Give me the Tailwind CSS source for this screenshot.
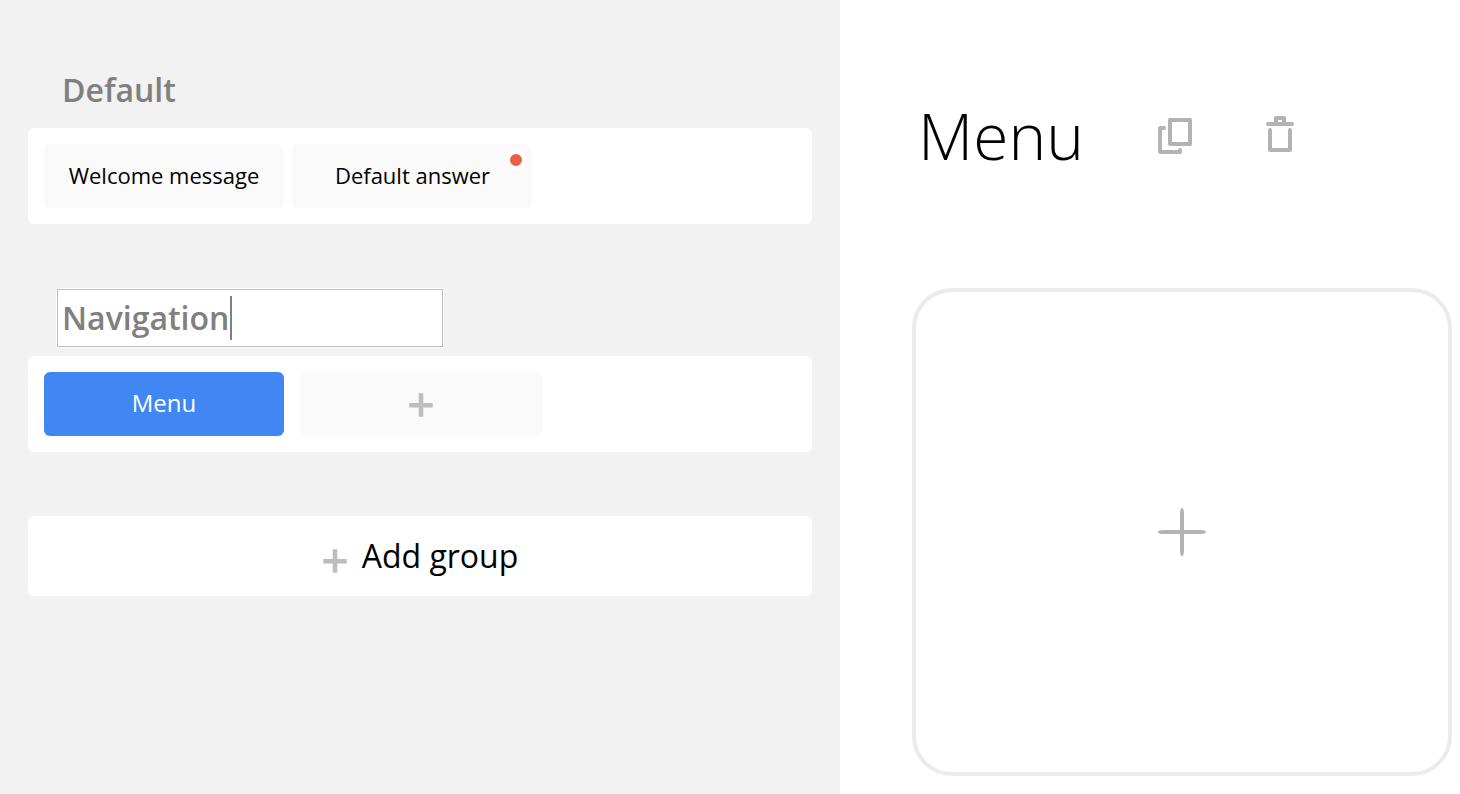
<!DOCTYPE html>
<html lang="en">
<head>
<meta charset="utf-8">
<title>Menu</title>
<script src="https://cdn.jsdelivr.net/npm/@tailwindcss/browser@4"></script>
</head>
<body class="h-[794px] w-[1460px] overflow-hidden bg-white font-['Open_Sans',sans-serif] text-black">
<div class="flex h-full">
  <aside class="flex w-[840px] shrink-0 flex-col bg-[#f2f2f2] px-7 pt-[62px]">
    <h2 class="ml-[34px] h-[58px] w-[386px] text-[32px] leading-[56px] font-semibold text-[#808080]">Default</h2>
    <div class="mt-2 flex h-24 gap-2 rounded-md bg-white p-4">
      <button class="h-16 w-60 rounded-md bg-[#fafafa] pb-0.5 text-[22px]">Welcome message</button>
      <button class="relative h-16 w-60 rounded-md bg-[#fafafa] pb-0.5 pl-px text-[22px]">Default answer
        <span class="absolute top-1.5 right-1.5 size-5 rounded-full border-4 border-white bg-[#ec5f45]"></span>
      </button>
    </div>
    <div class="mt-16 ml-7 flex h-[60px] w-[388px] items-center border border-white bg-white">
      <div class="flex h-[58px] w-full items-center border border-[#bdbdbd] pl-1">
        <span class="text-[32px] leading-[56px] font-semibold text-[#808080]">Navigation</span>
        <span class="ml-px h-11 w-0.5 bg-[#808080]"></span>
      </div>
    </div>
    <div class="mt-2 flex h-24 gap-4 rounded-md bg-white p-4">
      <button class="h-16 w-60 rounded-md bg-[#4087f4] pb-0.5 text-2xl text-white">Menu</button>
      <button class="flex h-16 w-[242px] items-center justify-center rounded-md bg-[#fafafa] pt-0.5">
        <svg class="size-6" viewBox="0 0 24 24" fill="none" stroke="#bdbdbd" stroke-width="4.5"><path d="M.3 12.2H23.7M12 .3V23.7"/></svg>
      </button>
    </div>
    <button class="mt-16 flex h-20 items-center justify-center gap-[15px] rounded-md bg-white pl-px">
      <svg class="mt-2.5 size-6" viewBox="0 0 24 24" fill="none" stroke="#bdbdbd" stroke-width="4.5"><path d="M.3 12.2H23.7M12 .3V23.7"/></svg>
      <span class="text-[32px]">Add group</span>
    </button>
  </aside>
  <main class="flex flex-1 flex-col pt-[88px] pl-[72px]">
    <header class="flex h-24 items-center pl-1.5">
      <h1 class="w-60 text-[64px] leading-[96px] font-light">Menu</h1>
      <svg class="h-9 w-[34px]" viewBox="0 0 34 36" fill="none" stroke="#b3b3b3" stroke-width="4" stroke-linecap="round" stroke-linejoin="round"><rect x="12" y="2" width="20" height="24"/><path d="M6 10H2V34H22V32"/></svg>
      <svg class="mb-1 ml-[74px] h-9 w-7" viewBox="0 0 28 36" fill="none" stroke="#b3b3b3" stroke-width="4" stroke-linecap="round" stroke-linejoin="round"><path d="M2 8H26M10 8V2H18V8M4 14V34H24V14"/></svg>
    </header>
    <button class="mt-[104px] flex h-[488px] w-[540px] items-center justify-center rounded-[40px] border-4 border-[#ebebeb]">
      <svg class="size-12" viewBox="0 0 48 48" fill="#b3b3b3"><path d="M0 24Q0 22 6 22H42Q48 22 48 24Q48 26 42 26H6Q0 26 0 24Z"/><path d="M24 0Q26 0 26 6V42Q26 48 24 48Q22 48 22 42V6Q22 0 24 0Z"/></svg>
    </button>
  </main>
</div>
</body>
</html>
